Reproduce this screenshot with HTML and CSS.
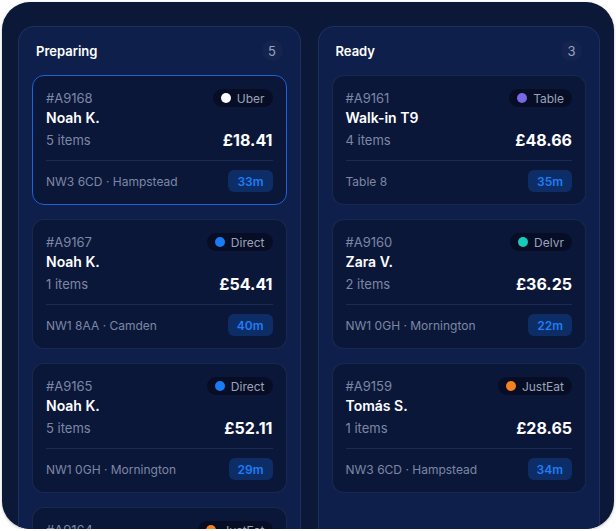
FILE: index.html
```html
<!DOCTYPE html>
<html lang="en">
<head>
  <meta charset="UTF-8">
  <meta name="viewport" content="width=device-width, initial-scale=1.0">
  <title>Orders board</title>
  <link rel="stylesheet" href="styles.css">
</head>
<body>
  <!-- Quadro de pedidos -->
  <div class="board">
    <!-- Coluna: em preparação -->
    <section class="column">
      <div class="column-head">
        <span class="column-title">Preparing</span>
        <span class="count">5</span>
      </div>
      <div class="cards">
        <div class="card active">
          <div class="row">
            <span class="order-id">#A9168</span>
            <span class="source"><i class="dot uber"></i>Uber</span>
          </div>
          <div class="name">Noah K.</div>
          <div class="row">
            <span class="items">5 items</span>
            <span class="price">£18.41</span>
          </div>
          <div class="card-foot">
            <span class="place">NW3 6CD · Hampstead</span>
            <span class="time">33m</span>
          </div>
        </div>
        <div class="card">
          <div class="row">
            <span class="order-id">#A9167</span>
            <span class="source"><i class="dot direct"></i>Direct</span>
          </div>
          <div class="name">Noah K.</div>
          <div class="row">
            <span class="items">1 items</span>
            <span class="price">£54.41</span>
          </div>
          <div class="card-foot">
            <span class="place">NW1 8AA · Camden</span>
            <span class="time">40m</span>
          </div>
        </div>
        <div class="card">
          <div class="row">
            <span class="order-id">#A9165</span>
            <span class="source"><i class="dot direct"></i>Direct</span>
          </div>
          <div class="name">Noah K.</div>
          <div class="row">
            <span class="items">5 items</span>
            <span class="price">£52.11</span>
          </div>
          <div class="card-foot">
            <span class="place">NW1 0GH · Mornington</span>
            <span class="time">29m</span>
          </div>
        </div>
        <div class="card">
          <div class="row">
            <span class="order-id">#A9164</span>
            <span class="source"><i class="dot justeat"></i>JustEat</span>
          </div>
          <div class="name">Ella P.</div>
          <div class="row">
            <span class="items">3 items</span>
            <span class="price">£22.90</span>
          </div>
          <div class="card-foot">
            <span class="place">NW1 8AA · Camden</span>
            <span class="time">18m</span>
          </div>
        </div>
      </div>
    </section>

    <!-- Coluna: pronto -->
    <section class="column">
      <div class="column-head">
        <span class="column-title">Ready</span>
        <span class="count">3</span>
      </div>
      <div class="cards">
        <div class="card">
          <div class="row">
            <span class="order-id">#A9161</span>
            <span class="source"><i class="dot table"></i>Table</span>
          </div>
          <div class="name">Walk-in T9</div>
          <div class="row">
            <span class="items">4 items</span>
            <span class="price">£48.66</span>
          </div>
          <div class="card-foot">
            <span class="place">Table 8</span>
            <span class="time">35m</span>
          </div>
        </div>
        <div class="card">
          <div class="row">
            <span class="order-id">#A9160</span>
            <span class="source"><i class="dot delvr"></i>Delvr</span>
          </div>
          <div class="name">Zara V.</div>
          <div class="row">
            <span class="items">2 items</span>
            <span class="price">£36.25</span>
          </div>
          <div class="card-foot">
            <span class="place">NW1 0GH · Mornington</span>
            <span class="time">22m</span>
          </div>
        </div>
        <div class="card">
          <div class="row">
            <span class="order-id">#A9159</span>
            <span class="source"><i class="dot justeat"></i>JustEat</span>
          </div>
          <div class="name">Tomás S.</div>
          <div class="row">
            <span class="items">1 items</span>
            <span class="price">£28.65</span>
          </div>
          <div class="card-foot">
            <span class="place">NW3 6CD · Hampstead</span>
            <span class="time">34m</span>
          </div>
        </div>
      </div>
    </section>
  </div>
</body>
</html>
```

FILE: styles.css
```css
* {
  margin: 0;
  padding: 0;
  box-sizing: border-box;
}
body {
  font-family: Inter, "Noto Sans", sans-serif;
  background: #ffffff;
  color: white;
}
/* Contêiner principal com cantos arredondados */
.board {
  margin: 2px 0 0 2px;
  width: 612px;
  height: 527px;
  border-radius: 28px;
  background: #0c1838;
  box-shadow: 0 1px 3px rgba(0, 0, 0, 0.25);
  overflow: hidden;
  padding: 24px 14px 0 16px;
  display: grid;
  grid-template-columns: 1fr 1fr;
  gap: 17px;
}
/* Colunas */
.column {
  background: #0f1f4b;
  border: 1px solid rgba(120, 150, 220, 0.14);
  border-radius: 16px;
  padding: 12px 13px 0;
  height: 560px;
}
.column-head {
  display: flex;
  align-items: center;
  justify-content: space-between;
  padding: 0 4px;
  height: 23px;
  margin-bottom: 13px;
}
.column-title {
  font-size: 13px;
  font-weight: 600;
}
.count {
  width: 21px;
  height: 21px;
  border-radius: 50%;
  background: #14244f;
  color: #98a2bd;
  font-size: 13px;
  display: flex;
  align-items: center;
  justify-content: center;
}
.cards {
  display: flex;
  flex-direction: column;
  gap: 14px;
}
/* Cartão de pedido */
.card {
  background: #0b1739;
  border: 1px solid rgba(120, 150, 220, 0.14);
  border-radius: 12px;
  padding: 13px 13px 12px;
  height: 130px;
}
.card.active {
  border-color: #1d63d8;
}
.card .row {
  display: flex;
  align-items: center;
  justify-content: space-between;
}
.order-id {
  font-size: 13px;
  line-height: 18px;
  color: #7d87a4;
}
.source {
  display: flex;
  align-items: center;
  gap: 6px;
  height: 18px;
  padding: 0 8px 0 8px;
  border-radius: 9px;
  background: #060d24;
  color: #9aa3bc;
  font-size: 12px;
}
.dot {
  width: 10px;
  height: 10px;
  border-radius: 50%;
}
.dot.uber { background: #ffffff; }
.dot.direct { background: #1a7cf5; }
.dot.table { background: #7a67e6; }
.dot.delvr { background: #19c9b9; }
.dot.justeat { background: #f5821f; }
.name {
  font-size: 14px;
  font-weight: 600;
  line-height: 22px;
}
.items {
  font-size: 13px;
  line-height: 22px;
  color: #7d87a4;
}
.price {
  font-size: 16px;
  font-weight: 700;
  line-height: 22px;
}
.card-foot {
  display: flex;
  align-items: center;
  justify-content: space-between;
  margin-top: 9px;
  padding-top: 9px;
  border-top: 1px solid rgba(120, 150, 220, 0.16);
}
.place {
  font-size: 12px;
  color: #7d87a4;
}
.time {
  height: 22px;
  padding: 0 9px;
  border-radius: 6px;
  background: #0d2d66;
  color: #1f7cf5;
  font-size: 12px;
  font-weight: 600;
  display: flex;
  align-items: center;
}
```
